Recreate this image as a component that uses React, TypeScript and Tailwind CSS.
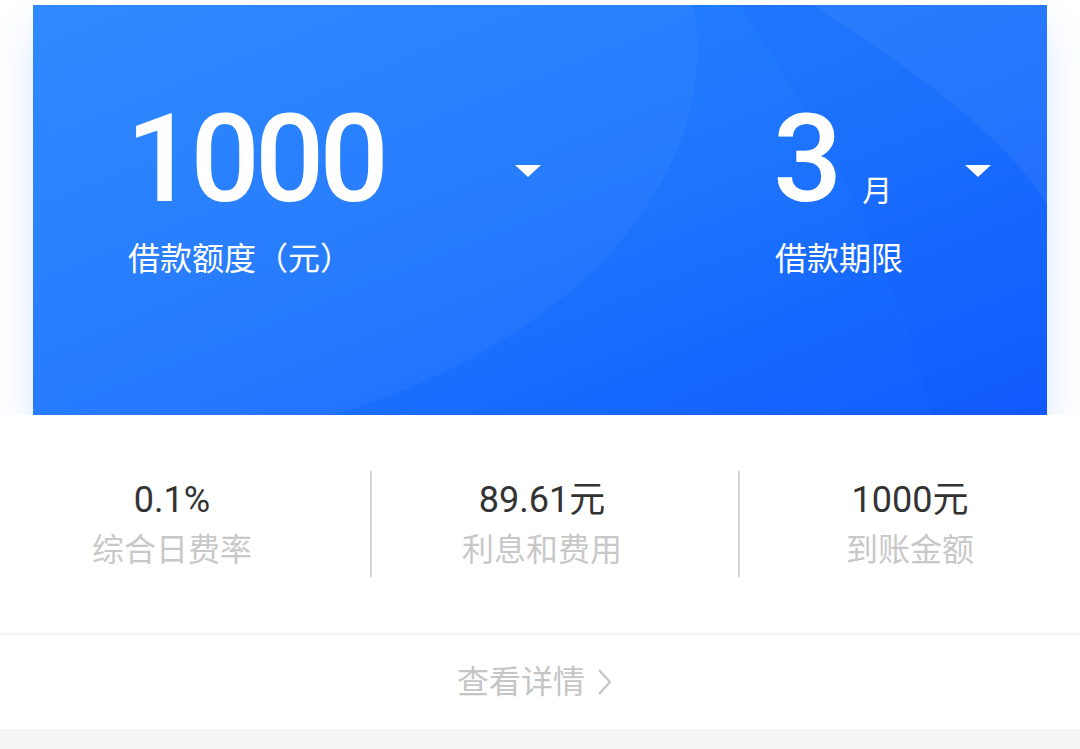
import React from 'react';

const stats = [
  { value: '0.1%', label: '综合日费率', width: 'w-[344px]', border: false },
  { value: '89.61元', label: '利息和费用', width: 'w-[342px]', border: true },
  { value: '1000元', label: '到账金额', width: 'w-[342px]', border: true },
];

function Caret() {
  return <div className="h-0 w-0 border-x-[13px] border-t-[12px] border-x-transparent border-t-white" />;
}

export default function App() {
  return (
    <div className="w-[1080px] min-h-[749px] bg-[#f4f5f7] font-['Roboto','Noto_Sans_CJK_SC',sans-serif]">
      <div className="bg-white px-[33px] pt-[5px]">
        <div className="relative h-[410px] overflow-hidden bg-gradient-to-br from-[#2785ff] via-[#1f76fd] to-[#125bff] shadow-[0_24px_40px_rgba(40,110,255,0.16)]">
          <svg className="absolute inset-0 h-full w-full" viewBox="0 0 1014 410" preserveAspectRatio="none">
            <path d="M0 0 H660 C690 160 560 330 300 410 H0 Z" fill="#ffffff" fillOpacity="0.04" />
            <path d="M705 0 C790 120 860 260 900 410 H1014 V0 Z" fill="#0a4ff0" fillOpacity="0.08" />
            <path d="M780 0 C890 70 980 140 1014 200 V0 Z" fill="#ffffff" fillOpacity="0.05" />
          </svg>

          <div className="relative flex pl-[95px] pt-[100px] text-white">
            <div className="w-[413px]">
              <div className="flex items-start justify-between">
                <span className="ml-[-2px] text-[122px] font-medium leading-[110px] tracking-[-0.04em]">1000</span>
                <div className="mt-[60px]">
                  <Caret />
                </div>
              </div>
              <div className="mt-[24px] text-[32px] leading-[40px]">借款额度（元）</div>
            </div>

            <div className="ml-[234px] w-[216px]">
              <div className="flex items-start justify-between">
                <div className="flex items-end">
                  <span className="ml-[-2px] text-[122px] font-medium leading-[110px]">3</span>
                  <span className="mb-[6px] ml-[20px] text-[30px] leading-[36px]">月</span>
                </div>
                <div className="mt-[60px]">
                  <Caret />
                </div>
              </div>
              <div className="mt-[24px] text-[32px] leading-[40px]">借款期限</div>
            </div>
          </div>
        </div>
      </div>

      <div className="relative z-10 bg-white">
        <div className="flex h-[218px] items-center gap-[26px]">
          {stats.map((s) => (
            <div
              key={s.label}
              className={`${s.width} flex h-[106px] flex-col items-center justify-center ${
                s.border ? 'border-l-2 border-[#d4d4d4]' : ''
              }`}
            >
              <div className="text-[36px] leading-[44px] text-[#333333]">{s.value}</div>
              <div className="mt-[8px] text-[32px] leading-[40px] text-[#c8c8c8]">{s.label}</div>
            </div>
          ))}
        </div>
        <div className="h-[2px] bg-[#f3f4f6]" />
        <div className="flex h-[94px] items-center justify-center gap-[12px] pr-[10px] text-[32px] text-[#c5c5c5]">
          <span>查看详情</span>
          <svg width="16" height="28" viewBox="0 0 16 28" fill="none">
            <path d="M2 2 L13 14 L2 26" stroke="#c5c5c5" strokeWidth="2.2" />
          </svg>
        </div>
      </div>
    </div>
  );
}
